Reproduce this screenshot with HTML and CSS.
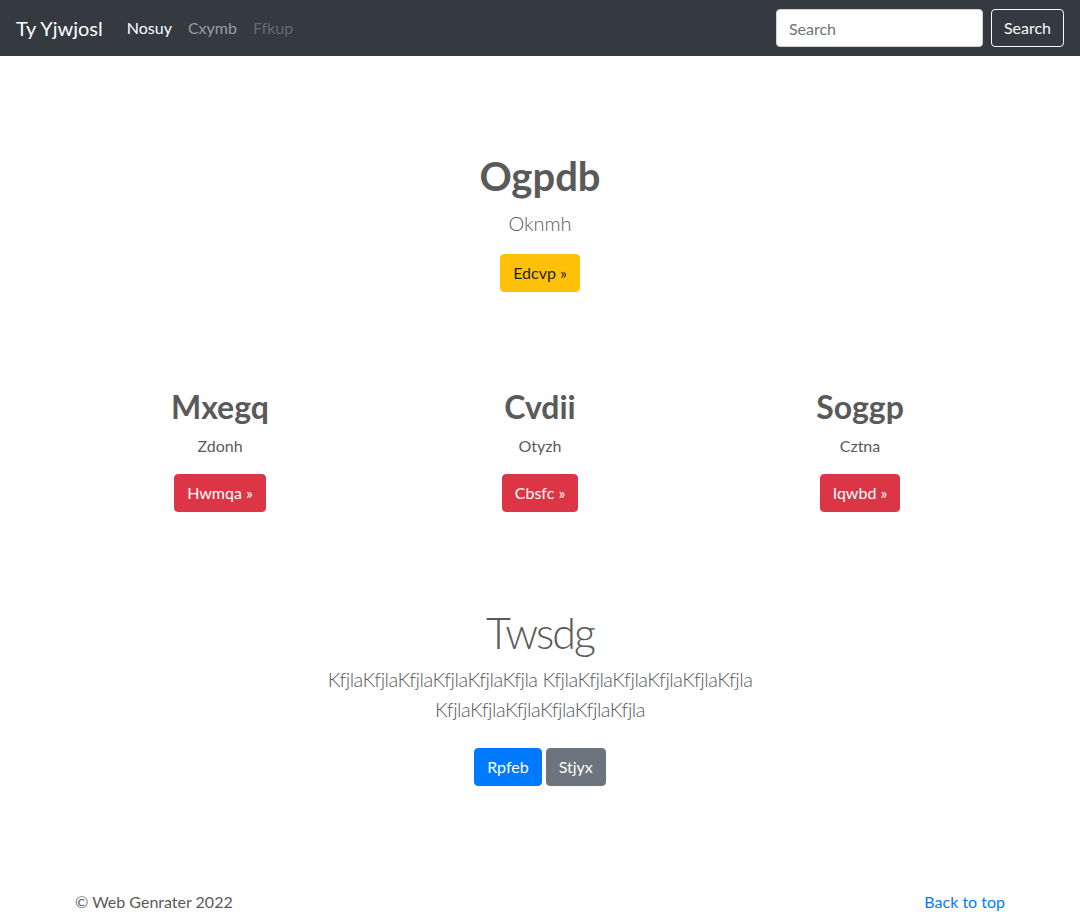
FILE: index.html
```html
<!DOCTYPE html>
<html lang="en">
<head>
<meta charset="utf-8">
<title>Ty Yjwjosl</title>
<link rel="stylesheet" href="styles.css">
</head>
<body>
<nav class="navbar">
  <a class="brand" href="#">Ty Yjwjosl</a>
  <ul class="nav">
    <li><a class="nav-link active" href="#">Nosuy</a></li>
    <li><a class="nav-link" href="#">Cxymb</a></li>
    <li><a class="nav-link disabled" href="#">Ffkup</a></li>
  </ul>
  <form class="search">
    <input class="search-input" type="text" placeholder="Search">
    <button class="search-btn" type="button">Search</button>
  </form>
</nav>
<main>
  <section class="hero">
    <h1 class="hero-title">Ogpdb</h1>
    <p class="lead">Oknmh</p>
    <p class="actions"><a class="btn btn-warning" href="#">Edcvp »</a></p>
  </section>
  <div class="container cols">
    <div class="col">
      <h2 class="col-title">Mxegq</h2>
      <p class="col-text">Zdonh</p>
      <p class="actions"><a class="btn btn-danger" href="#">Hwmqa »</a></p>
    </div>
    <div class="col">
      <h2 class="col-title">Cvdii</h2>
      <p class="col-text">Otyzh</p>
      <p class="actions"><a class="btn btn-danger" href="#">Cbsfc »</a></p>
    </div>
    <div class="col">
      <h2 class="col-title">Soggp</h2>
      <p class="col-text">Cztna</p>
      <p class="actions"><a class="btn btn-danger" href="#">Iqwbd »</a></p>
    </div>
  </div>
  <section class="feature">
    <h1 class="feature-title">Twsdg</h1>
    <p class="lead feature-lead">KfjlaKfjlaKfjlaKfjlaKfjlaKfjla KfjlaKfjlaKfjlaKfjlaKfjlaKfjla KfjlaKfjlaKfjlaKfjlaKfjlaKfjla</p>
    <p class="actions"><a class="btn btn-primary" href="#">Rpfeb</a><a class="btn btn-secondary" href="#">Stjyx</a></p>
  </section>
</main>
<footer class="container footer">
  <p class="copy">© Web Genrater 2022</p>
  <p class="top-link"><a href="#">Back to top</a></p>
</footer>
</body>
</html>
```

FILE: styles.css
```css
* { box-sizing: border-box; }
html, body { margin: 0; padding: 0; }
body {
  font-family: Lato, "Open Sans", "Liberation Sans", sans-serif;
  font-size: 16px;
  line-height: 1.5;
  color: #5a5a5a;
  background: #fff;
  font-variant-ligatures: none;
}
a { text-decoration: none; }
p { margin: 0 0 16px; }

/* navbar */
.navbar {
  display: flex;
  align-items: center;
  height: 56px;
  padding: 8px 16px;
  background: #343a40;
}
.brand {
  font-size: 20px;
  line-height: 30px;
  padding: 5px 0;
  margin-right: 16px;
  color: #fff;
}
.nav {
  display: flex;
  list-style: none;
  margin: 0;
  padding: 0;
  flex: 1;
}
.nav-link {
  display: block;
  padding: 8px;
  color: rgba(255,255,255,.5);
}
.nav-link.active { color: #fff; }
.nav-link.disabled { color: rgba(255,255,255,.25); }
.search { display: flex; align-items: center; }
.search-input {
  width: 207px;
  height: 38px;
  padding: 6px 12px;
  margin-right: 8px;
  font: inherit;
  color: #495057;
  background: #fff;
  border: 1px solid #ced4da;
  border-radius: 4px;
}
.search-input::placeholder { color: #6c757d; }
.search-btn {
  height: 38px;
  padding: 6px 12px;
  font: inherit;
  color: #f8f9fa;
  background: transparent;
  border: 1px solid #f8f9fa;
  border-radius: 4px;
}

/* buttons */
.actions { display: flex; justify-content: center; gap: 4px; }
.btn {
  display: inline-block;
  padding: 6px 12px;
  font-size: 16px;
  line-height: 24px;
  border: 1px solid transparent;
  border-radius: 4px;
  color: #fff;
}
.btn-warning { background: #ffc107; border-color: #ffc107; color: #212529; }
.btn-danger { background: #dc3545; border-color: #dc3545; }
.btn-primary { background: #007bff; border-color: #007bff; }
.btn-secondary { background: #6c757d; border-color: #6c757d; }

.lead { font-size: 20px; font-weight: 300; line-height: 30px; }

/* hero */
.hero { text-align: center; padding-top: 96px; }
.hero-title {
  margin: 0 0 8px;
  font-size: 40px;
  line-height: 48px;
  font-weight: 700;
}

/* columns */
.container { width: 960px; margin: 0 auto; padding: 0 15px; }
.cols { display: flex; margin-top: 96px; padding: 0; }
.col { flex: 1; text-align: center; padding: 0 15px; }
.col-title {
  margin: 0 0 8px;
  font-size: 32px;
  line-height: 38px;
  font-weight: 700;
}

/* feature */
.feature { text-align: center; margin-top: 76px; }
.feature-title {
  margin: 0 0 2px;
  font-size: 43px;
  line-height: 58px;
  font-weight: 300;
  letter-spacing: -2px;
}
.feature-lead {
  max-width: 560px;
  margin: 0 auto 24px;
  letter-spacing: -0.5px;
}

/* footer */
.footer {
  display: flex;
  justify-content: space-between;
  margin-top: 104px;
}
.top-link a { color: #007bff; }
```
